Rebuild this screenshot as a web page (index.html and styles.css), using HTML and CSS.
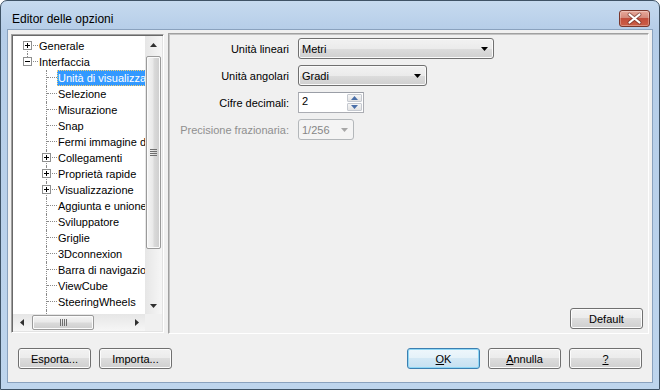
FILE: index.html
```html
<!DOCTYPE html>
<html lang="it">
<head>
    <meta charset="UTF-8">
    <title>Editor delle opzioni</title>
    <link rel="stylesheet" href="styles.css">
</head>
<body>
  <div class="window">
    <div class="titlebar">
      <span class="title">Editor delle opzioni</span>
      <span class="close">
        <svg width="29" height="15" viewBox="0 0 29 15">
          <path d="M9.5 3.5L19.5 11.5M19.5 3.5L9.5 11.5" stroke="#5a2620" stroke-width="4" stroke-linecap="round" opacity="0.55"/>
          <path d="M9.5 3.5L19.5 11.5M19.5 3.5L9.5 11.5" stroke="#fff" stroke-width="2.2" stroke-linecap="round"/>
        </svg>
      </span>
    </div>

    <div class="client">
      <div class="main">
        <!-- albero delle categorie -->
        <div class="tree">
          <div class="tree-top">
            <div class="tree-list">
              <div class="item"><span class="node first"><svg class="box" width="9" height="9"><rect x="0.5" y="0.5" width="8" height="8" fill="#fff" stroke="#8e8f8f"/><path d="M2 4.5h5M4.5 2v5" stroke="#000"/></svg></span><span class="label">Generale</span></div>
              <div class="item"><span class="node last"><svg class="box" width="9" height="9"><rect x="0.5" y="0.5" width="8" height="8" fill="#fff" stroke="#8e8f8f"/><path d="M2 4.5h5" stroke="#000"/></svg></span><span class="label">Interfaccia</span></div>
              <div class="item l1"><span class="node"></span><span class="label sel">Unità di visualizzazione</span></div>
              <div class="item l1"><span class="node"></span><span class="label">Selezione</span></div>
              <div class="item l1"><span class="node"></span><span class="label">Misurazione</span></div>
              <div class="item l1"><span class="node"></span><span class="label">Snap</span></div>
              <div class="item l1"><span class="node"></span><span class="label">Fermi immagine dinamici</span></div>
              <div class="item l1"><span class="node"><svg class="box" width="9" height="9"><rect x="0.5" y="0.5" width="8" height="8" fill="#fff" stroke="#8e8f8f"/><path d="M2 4.5h5M4.5 2v5" stroke="#000"/></svg></span><span class="label">Collegamenti</span></div>
              <div class="item l1"><span class="node"><svg class="box" width="9" height="9"><rect x="0.5" y="0.5" width="8" height="8" fill="#fff" stroke="#8e8f8f"/><path d="M2 4.5h5M4.5 2v5" stroke="#000"/></svg></span><span class="label">Proprietà rapide</span></div>
              <div class="item l1"><span class="node"><svg class="box" width="9" height="9"><rect x="0.5" y="0.5" width="8" height="8" fill="#fff" stroke="#8e8f8f"/><path d="M2 4.5h5M4.5 2v5" stroke="#000"/></svg></span><span class="label">Visualizzazione</span></div>
              <div class="item l1"><span class="node"></span><span class="label">Aggiunta e unione</span></div>
              <div class="item l1"><span class="node"></span><span class="label">Sviluppatore</span></div>
              <div class="item l1"><span class="node"></span><span class="label">Griglie</span></div>
              <div class="item l1"><span class="node"></span><span class="label">3Dconnexion</span></div>
              <div class="item l1"><span class="node"></span><span class="label">Barra di navigazione</span></div>
              <div class="item l1"><span class="node"></span><span class="label">ViewCube</span></div>
              <div class="item l1"><span class="node"></span><span class="label">SteeringWheels</span></div>
              <div class="item l1"><span class="node"></span><span class="label">Sfondo e interfaccia</span></div>
            </div>
            <div class="vscroll">
              <div class="arrow"><svg width="7" height="4"><path d="M0 4h7L3.5 0z" fill="#2f2f2f"/></svg></div>
              <div class="vthumb">
                <svg width="7" height="7"><path d="M0 0.5h7M0 2.5h7M0 4.5h7M0 6.5h7" stroke="#6f6f6f"/></svg>
              </div>
              <div class="arrow end"><svg width="7" height="4"><path d="M0 0h7L3.5 4z" fill="#2f2f2f"/></svg></div>
            </div>
          </div>
          <div class="tree-bottom">
            <div class="hscroll">
              <div class="arrow"><svg width="4" height="7"><path d="M4 0v7L0 3.5z" fill="#2f2f2f"/></svg></div>
              <div class="hthumb">
                <svg width="7" height="7"><path d="M0.5 0v7M2.5 0v7M4.5 0v7M6.5 0v7" stroke="#6f6f6f"/></svg>
              </div>
              <div class="arrow end"><svg width="4" height="7"><path d="M0 0v7L4 3.5z" fill="#2f2f2f"/></svg></div>
            </div>
            <div class="corner"></div>
          </div>
        </div>

        <!-- pannello opzioni -->
        <div class="pane">
          <div class="form">
            <label class="field-label">Unità lineari</label>
            <div class="combo w-metri"><span class="combo-text">Metri</span><svg width="7" height="4"><path d="M0 0h7L3.5 4z" fill="#000"/></svg></div>

            <label class="field-label">Unità angolari</label>
            <div class="combo w-gradi"><span class="combo-text">Gradi</span><svg width="7" height="4"><path d="M0 0h7L3.5 4z" fill="#000"/></svg></div>

            <label class="field-label">Cifre decimali:</label>
            <div class="spin">
              <span class="spin-input">2</span>
              <span class="spin-btns">
                <span class="spin-btn"><svg width="7" height="4"><path d="M0 4h7L3.5 0z" fill="#4a6fa8"/></svg></span>
                <span class="spin-btn"><svg width="7" height="4"><path d="M0 0h7L3.5 4z" fill="#4a6fa8"/></svg></span>
              </span>
            </div>

            <label class="field-label disabled">Precisione frazionaria:</label>
            <div class="combo off w-prec"><span class="combo-text">1/256</span><svg width="7" height="4"><path d="M0 0h7L3.5 4z" fill="#a7a7a7"/></svg></div>
          </div>
          <div class="pane-foot">
            <button class="btn" type="button">Default</button>
          </div>
        </div>
      </div>

      <div class="footer">
        <div class="group">
          <button class="btn" type="button">Esporta...</button>
          <button class="btn" type="button">Importa...</button>
        </div>
        <div class="group">
          <button class="btn primary" type="button"><u>O</u>K</button>
          <button class="btn" type="button"><u>A</u>nnulla</button>
          <button class="btn" type="button"><u>?</u></button>
        </div>
      </div>
    </div>
  </div>
</body>
</html>
```

FILE: styles.css
```css
body {
  margin: 0;
  font-family: "Liberation Sans", Arial, sans-serif;
  font-size: 11px;
  color: #000;
}

.window {
  width: 660px;
  height: 390px;
  box-sizing: border-box;
  border: 1px solid #3f5366;
  border-radius: 7px 7px 0 0;
  background: linear-gradient(#c6daef, #b5cde8 30px, #bed5ed);
  padding: 0 7px 7px;
  display: flex;
  flex-direction: column;
}

.titlebar {
  height: 29px;
  box-sizing: border-box;
  padding: 6px 0 0 4px;
  display: flex;
  align-items: center;
}

.title {
  font-size: 12px;
  flex: 1;
}

.close {
  width: 31px;
  height: 17px;
  box-sizing: border-box;
  margin-right: 2px;
  border: 1px solid #7a372c;
  border-radius: 3px;
  background: linear-gradient(#e9a99b, #d48a7b 45%, #c24e3c 50%, #cd5e46);
  box-shadow: inset 0 0 0 1px rgba(255, 255, 255, 0.3);
  display: flex;
  align-items: center;
  justify-content: center;
}

.client {
  flex: 1;
  background: #f0f0f0;
  padding: 3px 3px 0 3px;
  display: flex;
  flex-direction: column;
  box-shadow: 0 0 0 1px #8aa2be;
}

.main {
  display: flex;
  gap: 4px;
  height: 301px;
  align-items: flex-start;
}

/* tree */

.tree {
  width: 153px;
  height: 299px;
  margin-top: 1px;
  box-sizing: border-box;
  border: 1px solid;
  border-color: #a0a0a0 #fff #fff #a0a0a0;
  box-shadow: inset 1px 1px 0 #696969, inset -1px -1px 0 #e3e3e3;
  padding: 1px;
  display: flex;
  flex-direction: column;
}

.tree-top {
  flex: 1;
  min-height: 0;
  display: flex;
}

.tree-list {
  flex: 1;
  overflow: hidden;
  background: #fff;
  padding-top: 2px;
}

.item {
  display: flex;
  height: 16px;
  white-space: nowrap;
}

.item.l1 {
  padding-left: 19px;
}

.node {
  position: relative;
  flex: none;
  width: 25px;
  height: 16px;
}

.node::before {
  content: "";
  position: absolute;
  left: 14px;
  top: 0;
  bottom: 0;
  border-left: 1px dotted #8a8a8a;
}

.node.first::before {
  top: 7px;
}

.node.last::before {
  bottom: auto;
  height: 7px;
}

.node::after {
  content: "";
  position: absolute;
  left: 15px;
  top: 7px;
  width: 10px;
  border-top: 1px dotted #8a8a8a;
}

.box {
  position: absolute;
  left: 10px;
  top: 3px;
  z-index: 1;
}

.label {
  flex: none;
  line-height: 16px;
  padding: 0 2px 0 1px;
}

.label.sel {
  background: #3399ff;
  color: #fff;
  outline: 1px dotted #f5cf72;
  outline-offset: -1px;
}

.vscroll {
  width: 17px;
  display: flex;
  flex-direction: column;
  background: linear-gradient(to right, #e6e6e6, #f6f6f6);
}

.vscroll .arrow {
  height: 17px;
  display: flex;
  align-items: center;
  justify-content: center;
}

.vscroll .end {
  margin-top: auto;
}

.vthumb {
  height: 193px;
  margin: 3px 1px 0;
  box-sizing: border-box;
  border: 1px solid #9a9a9a;
  border-radius: 2px;
  background: linear-gradient(to right, #f5f5f5, #e9e9e9 45%, #dadada 55%, #cdcdcd);
  box-shadow: inset 0 0 0 1px #fbfbfb;
  display: flex;
  align-items: center;
  justify-content: center;
}

.tree-bottom {
  height: 17px;
  display: flex;
}

.hscroll {
  flex: 1;
  display: flex;
  background: linear-gradient(#e6e6e6, #f6f6f6);
}

.hscroll .arrow {
  width: 17px;
  display: flex;
  align-items: center;
  justify-content: center;
}

.hscroll .end {
  margin-left: auto;
}

.hthumb {
  width: 62px;
  margin: 1px 0 1px 2px;
  box-sizing: border-box;
  border: 1px solid #9a9a9a;
  border-radius: 2px;
  background: linear-gradient(#f5f5f5, #e9e9e9 45%, #dadada 55%, #cdcdcd);
  box-shadow: inset 0 0 0 1px #fbfbfb;
  display: flex;
  align-items: center;
  justify-content: center;
}

.corner {
  width: 17px;
  background: #f0f0f0;
}

/* options pane */

.pane {
  width: 481px;
  height: 301px;
  box-sizing: border-box;
  border: 1px solid;
  border-color: #a0a0a0 #fff #fff #a0a0a0;
  box-shadow: inset 1px 1px 0 #c4c4c4;
  display: flex;
  flex-direction: column;
}

.form {
  display: grid;
  grid-template-columns: 120px auto;
  grid-auto-rows: 21px;
  column-gap: 9px;
  row-gap: 6px;
  padding-top: 4px;
  align-items: center;
  justify-items: start;
}

.field-label {
  justify-self: end;
  text-align: right;
  white-space: nowrap;
}

.field-label.disabled {
  color: #8f8f8f;
}

.combo {
  height: 21px;
  box-sizing: border-box;
  border: 1px solid #707070;
  border-radius: 3px;
  background: linear-gradient(#f2f2f2, #ebebeb 50%, #dddddd 50%, #cfcfcf);
  box-shadow: inset 0 0 0 1px #fafafa;
  display: flex;
  align-items: center;
  padding: 0 5px 0 3px;
}

.combo-text {
  flex: 1;
}

.combo.off {
  border-color: #b3b7ba;
  background: #f4f4f4;
  box-shadow: none;
  color: #868686;
}

.w-metri {
  width: 196px;
}

.w-gradi {
  width: 129px;
}

.w-prec {
  width: 56px;
}

.spin {
  width: 66px;
  height: 21px;
  display: flex;
  box-sizing: border-box;
  border: 1px solid #abadb3;
  border-top-color: #9a9ea6;
  background: #fff;
}

.spin-input {
  flex: 1;
  padding: 2px 0 0 3px;
}

.spin-btns {
  width: 15px;
  display: flex;
  flex-direction: column;
  gap: 1px;
  padding: 1px 1px 1px 0;
}

.spin-btn {
  flex: 1;
  border: 1px solid #c5c9d0;
  border-radius: 1px;
  background: linear-gradient(#f6f6f6, #e3e3e3);
  display: flex;
  align-items: center;
  justify-content: center;
}

.pane-foot {
  margin-top: auto;
  display: flex;
  justify-content: flex-end;
  padding: 0 5px 4px 0;
}

/* buttons */

.btn {
  width: 73px;
  height: 21px;
  box-sizing: border-box;
  padding: 0;
  border: 1px solid #707070;
  border-radius: 3px;
  background: linear-gradient(#f2f2f2, #ebebeb 50%, #dddddd 50%, #cfcfcf);
  box-shadow: inset 0 0 0 1px #fcfcfc;
  font-family: inherit;
  font-size: 11px;
  color: #000;
}

.btn.primary {
  border-color: #3c7fb1;
  background: linear-gradient(#eef7fc, #e4f1f9 50%, #d3e8f5 50%, #c6e0f1);
  box-shadow: inset 0 0 0 1px #8fd7f5;
}

.footer {
  display: flex;
  justify-content: space-between;
  padding: 14px 7px 0 7px;
}

.group {
  display: flex;
  gap: 8px;
}
```
